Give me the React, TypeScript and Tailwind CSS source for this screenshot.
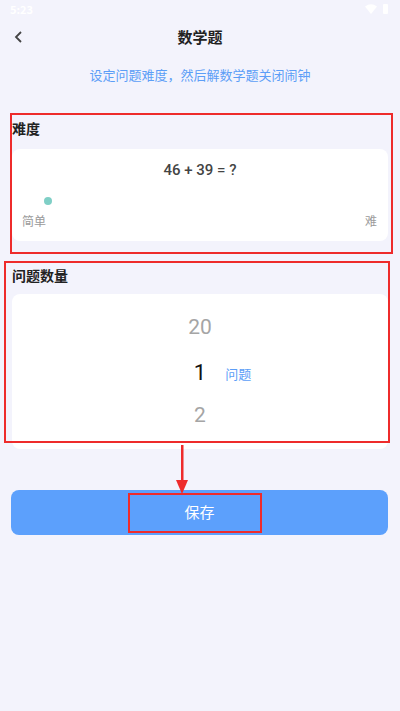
import React from 'react';

const font = { fontFamily: '"Noto Sans CJK SC", "Noto Sans", sans-serif' };

const StatusBar: React.FC = () => (
    <div className="flex h-[18px] items-center justify-between pl-[10px] pr-[12px] text-[11px] font-bold text-white">
        <span>5:23</span>
        <div className="flex items-center gap-[6px]">
            <svg width="12" height="10" viewBox="0 0 12 10"><path d="M0 2.5 Q6 -2 12 2.5 L6 10 Z" fill="white" /></svg>
            <div className="h-[10px] w-[5px] rounded-[1px] bg-white"></div>
        </div>
    </div>
);

const PickerRow: React.FC<{ value: string; active?: boolean }> = ({ value, active }) => (
    <div className="grid h-[44px] grid-cols-[1fr_auto_1fr] items-center">
        <div></div>
        <span className={`font-['Roboto',sans-serif] ${active ? 'text-[22px] text-[#111]' : 'text-[21px] text-[#a5a5a5]'}`}>{value}</span>
        <div className="pl-[19px]">
            {active && <span className="text-[13px] text-[#5c9ef7]">问题</span>}
        </div>
    </div>
);

export default function App() {
    return (
        <div className="relative h-[711px] w-[400px] overflow-hidden bg-[#f3f3fc]" style={font}>
            <StatusBar />

            <div className="relative flex h-[38px] items-center justify-center">
                <svg className="absolute left-[14px] top-[13px]" width="10" height="12" viewBox="0 0 10 12">
                    <path d="M7 1 L2 6 L7 11" fill="none" stroke="#444" strokeWidth="1.8" />
                </svg>
                <h1 className="text-[15px] font-bold text-[#222]">数学题</h1>
            </div>

            <p className="mt-[10px] text-center text-[13px] leading-[18px] text-[#5c9ef7]">设定问题难度，然后解数学题关闭闹钟</p>

            <div className="px-[12px]">
                <h2 className="mt-[34px] text-[14px] font-bold leading-[20px] text-[#222]">难度</h2>
                <div className="mt-[11px] h-[92px] rounded-[8px] bg-white">
                    <p className="pt-[11px] text-center font-['Roboto',sans-serif] text-[15px] font-medium leading-[20px] text-[#444]">46 + 39 = ?</p>
                    <div className="ml-[32px] mt-[17px] h-[8px] w-[8px] rounded-full bg-[#7fcfc6]"></div>
                    <div className="mt-[8px] flex justify-between pl-[10px] pr-[11px] text-[12px] leading-[16px] text-[#9a9a9a]">
                        <span>简单</span>
                        <span>难</span>
                    </div>
                </div>

                <h2 className="mt-[24px] text-[14px] font-bold leading-[20px] text-[#222]">问题数量</h2>
                <div className="mt-[9px] h-[155px] rounded-[8px] bg-white pt-[12px]">
                    <PickerRow value="20" />
                    <PickerRow value="1" active />
                    <PickerRow value="2" />
                </div>
            </div>

            <button className="mx-[11px] mt-[41px] flex h-[45px] w-[377px] items-center justify-center rounded-[8px] bg-[#5ca0fc] text-[15px] text-white">
                保存
            </button>

            {/* annotation overlays */}
            <div className="absolute left-[10px] top-[113px] h-[141px] w-[383px] border-2 border-[#ee2b2b]"></div>
            <div className="absolute left-[4px] top-[261px] h-[182px] w-[386px] border-2 border-[#ee2b2b]"></div>
            <div className="absolute left-[128px] top-[493px] h-[40px] w-[134px] border-2 border-[#ee2b2b]"></div>
            <svg className="absolute left-[175px] top-[445px]" width="14" height="50" viewBox="0 0 14 50">
                <rect x="6" y="0" width="2.5" height="40" fill="#ee2b2b" />
                <path d="M1 35 L13 35 L7 49 Z" fill="#ee2b2b" />
            </svg>
        </div>
    );
}
